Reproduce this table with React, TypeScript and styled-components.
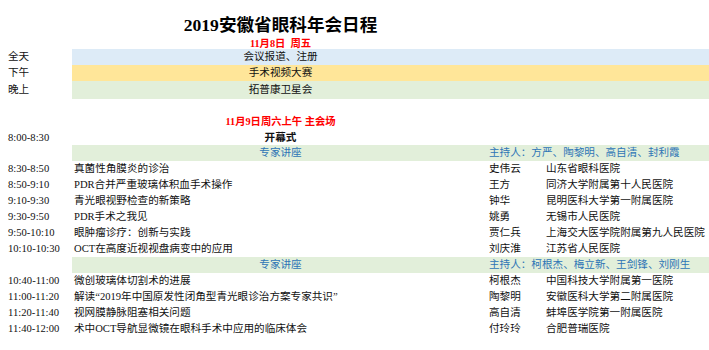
import React from "react"
import styled, { createGlobalStyle } from "styled-components"

const GlobalStyle = createGlobalStyle`
  body {
    margin: 0;
    background: #ffffff;
  }
`

const Sheet = styled.div`
  width: 709px;
  height: 350px;
  padding-left: 8px;
  box-sizing: border-box;
  overflow: hidden;
  font-family: "Liberation Serif", "Noto Sans CJK SC", serif;
  font-size: 10.6px;
  color: #111111;
`

const Row = styled.div<{ $h: number }>`
  display: grid;
  grid-template-columns: 64px 1fr;
  height: ${(p) => p.$h}px;
  line-height: ${(p) => p.$h}px;
  white-space: nowrap;
`

const Label = styled.div`
  font-family: "Liberation Serif", "Noto Sans CJK SC", serif;
`

const Body = styled.div<{ $bg?: string }>`
  display: grid;
  grid-template-columns: 417px 57px 1fr;
  background: ${(p) => p.$bg ?? "transparent"};
`

const Topic = styled.div<{ $center?: boolean; $bold?: boolean }>`
  padding-left: ${(p) => (p.$center ? 0 : 2)}px;
  text-align: ${(p) => (p.$center ? "center" : "left")};
  font-weight: ${(p) => (p.$bold ? 700 : 400)};
`

const Title = styled.div`
  grid-column: 2;
  width: 417px;
  padding-top: 12px;
  line-height: 26px;
  text-align: center;
  font-size: 17.6px;
  font-weight: 700;
  color: #000000;
`

const DateLine = styled.div`
  width: 417px;
  text-align: center;
  font-size: 10.3px;
  font-weight: 700;
  color: #ff0000;
  white-space: pre;
`

const BandTitle = styled.div`
  text-align: center;
  color: #2e75b6;
`

const Host = styled.div`
  grid-column: 2 / 4;
  color: #2e75b6;
`

const Speaker = styled.div``

const Hospital = styled.div``

const TitleRow = styled.div`
  display: grid;
  grid-template-columns: 64px 1fr;
  height: 38px;
`

type Talk = [string, string, string, string]

const firstBlock: Talk[] = [
  ["8:30-8:50", "真菌性角膜炎的诊治", "史伟云", "山东省眼科医院"],
  ["8:50-9:10", "PDR合并严重玻璃体积血手术操作", "王方", "同济大学附属第十人民医院"],
  ["9:10-9:30", "青光眼视野检查的新策略", "钟华", "昆明医科大学第一附属医院"],
  ["9:30-9:50", "PDR手术之我见", "姚勇", "无锡市人民医院"],
  ["9:50-10:10", "眼肿瘤诊疗：创新与实践", "贾仁兵", "上海交大医学院附属第九人民医院"],
  ["10:10-10:30", "OCT在高度近视视盘病变中的应用", "刘庆淮", "江苏省人民医院"],
]

const secondBlock: Talk[] = [
  ["10:40-11:00", "微创玻璃体切割术的进展", "柯根杰", "中国科技大学附属第一医院"],
  ["11:00-11:20", "解读“2019年中国原发性闭角型青光眼诊治方案专家共识”", "陶黎明", "安徽医科大学第二附属医院"],
  ["11:20-11:40", "视网膜静脉阻塞相关问题", "高自清", "蚌埠医学院第一附属医院"],
  ["11:40-12:00", "术中OCT导航显微镜在眼科手术中应用的临床体会", "付玲玲", "合肥普瑞医院"],
]

function TalkRows({ talks }: { talks: Talk[] }) {
  return (
    <>
      {talks.map(([time, topic, speaker, hospital]) => (
        <Row $h={16} key={time}>
          <Label>{time}</Label>
          <Body>
            <Topic>{topic}</Topic>
            <Speaker>{speaker}</Speaker>
            <Hospital>{hospital}</Hospital>
          </Body>
        </Row>
      ))}
    </>
  )
}

function Band({ host, h }: { host: string; h: number }) {
  return (
    <Row $h={h}>
      <Label />
      <Body $bg="#e2efda">
        <BandTitle>专家讲座</BandTitle>
        <Host>{host}</Host>
      </Body>
    </Row>
  )
}

export default function App() {
  return (
    <>
      <GlobalStyle />
      <Sheet>
        <TitleRow>
          <Title>2019安徽省眼科年会日程</Title>
        </TitleRow>
        <Row $h={11}>
          <Label />
          <DateLine>{"11月8日  周五"}</DateLine>
        </Row>
        <Row $h={16}>
          <Label>全天</Label>
          <Body $bg="#ddebf7">
            <Topic $center>会议报道、注册</Topic>
          </Body>
        </Row>
        <Row $h={16}>
          <Label>下午</Label>
          <Body $bg="#ffe699">
            <Topic $center>手术视频大赛</Topic>
          </Body>
        </Row>
        <Row $h={18}>
          <Label>晚上</Label>
          <Body $bg="#e2efda">
            <Topic $center>拓普康卫星会</Topic>
          </Body>
        </Row>
        <Row $h={15} />
        <Row $h={16}>
          <Label />
          <DateLine>11月9日周六上午 主会场</DateLine>
        </Row>
        <Row $h={15}>
          <Label>8:00-8:30</Label>
          <Body>
            <Topic $center $bold>开幕式</Topic>
          </Body>
        </Row>
        <Band h={16} host="主持人：方严、陶黎明、高自清、封利霞" />
        <TalkRows talks={firstBlock} />
        <Band h={16} host="主持人：柯根杰、梅立新、王剑锋、刘刚生" />
        <TalkRows talks={secondBlock} />
      </Sheet>
    </>
  )
}
